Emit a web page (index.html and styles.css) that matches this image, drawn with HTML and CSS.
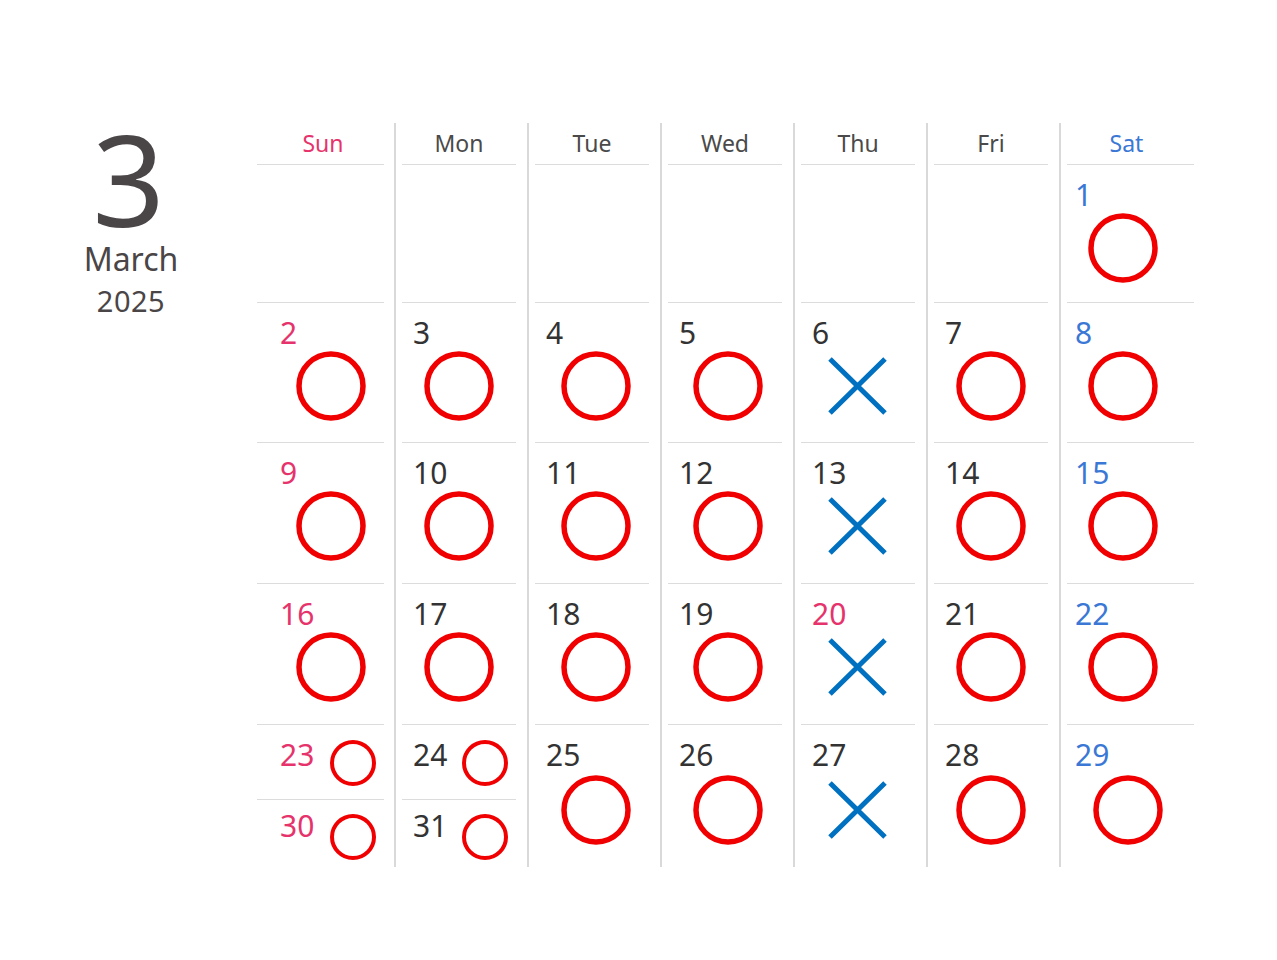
FILE: index.html
```html
<!DOCTYPE html>
<html lang="en">
<head>
<meta charset="utf-8">
<title>March 2025</title>
<link rel="stylesheet" href="styles.css">
</head>
<body>
<svg class="defs" aria-hidden="true">
  <symbol id="o" viewBox="0 0 70 70"><circle cx="35" cy="35" r="32" fill="none" stroke="#f00000" stroke-width="5.5"/></symbol>
  <symbol id="os" viewBox="0 0 46 46"><circle cx="23" cy="23" r="21" fill="none" stroke="#f00000" stroke-width="4"/></symbol>
  <symbol id="x" viewBox="0 0 70 70"><path d="M7 8L62 62M62 8L7 62" fill="none" stroke="#0070c0" stroke-width="5"/></symbol>
</svg>
<div class="page">
  <div class="side">
    <div class="big">3</div>
    <div class="month">March</div>
    <div class="year">2025</div>
  </div>
  <div class="cal">
    <div class="c sun h"><span>Sun</span></div>
    <div class="c h"><span>Mon</span></div>
    <div class="c h"><span>Tue</span></div>
    <div class="c h"><span>Wed</span></div>
    <div class="c h"><span>Thu</span></div>
    <div class="c h"><span>Fri</span></div>
    <div class="c sat h"><span>Sat</span></div>

    <div class="c sun"><div class="in"></div></div>
    <div class="c"><div class="in"></div></div>
    <div class="c"><div class="in"></div></div>
    <div class="c"><div class="in"></div></div>
    <div class="c"><div class="in"></div></div>
    <div class="c"><div class="in"></div></div>
    <div class="c sat"><div class="in"><span class="num">1</span><svg class="mk"><use href="#o"/></svg></div></div>

    <div class="c sun"><div class="in"><span class="num">2</span><svg class="mk"><use href="#o"/></svg></div></div>
    <div class="c"><div class="in"><span class="num">3</span><svg class="mk"><use href="#o"/></svg></div></div>
    <div class="c tue"><div class="in"><span class="num">4</span><svg class="mk"><use href="#o"/></svg></div></div>
    <div class="c wed"><div class="in"><span class="num">5</span><svg class="mk"><use href="#o"/></svg></div></div>
    <div class="c"><div class="in"><span class="num">6</span><svg class="mk"><use href="#x"/></svg></div></div>
    <div class="c"><div class="in"><span class="num">7</span><svg class="mk"><use href="#o"/></svg></div></div>
    <div class="c sat"><div class="in"><span class="num">8</span><svg class="mk"><use href="#o"/></svg></div></div>

    <div class="c sun"><div class="in"><span class="num">9</span><svg class="mk"><use href="#o"/></svg></div></div>
    <div class="c"><div class="in"><span class="num">10</span><svg class="mk"><use href="#o"/></svg></div></div>
    <div class="c tue"><div class="in"><span class="num">11</span><svg class="mk"><use href="#o"/></svg></div></div>
    <div class="c wed"><div class="in"><span class="num">12</span><svg class="mk"><use href="#o"/></svg></div></div>
    <div class="c"><div class="in"><span class="num">13</span><svg class="mk"><use href="#x"/></svg></div></div>
    <div class="c"><div class="in"><span class="num">14</span><svg class="mk"><use href="#o"/></svg></div></div>
    <div class="c sat"><div class="in"><span class="num">15</span><svg class="mk"><use href="#o"/></svg></div></div>

    <div class="c sun"><div class="in"><span class="num">16</span><svg class="mk"><use href="#o"/></svg></div></div>
    <div class="c"><div class="in"><span class="num">17</span><svg class="mk"><use href="#o"/></svg></div></div>
    <div class="c tue"><div class="in"><span class="num">18</span><svg class="mk"><use href="#o"/></svg></div></div>
    <div class="c wed"><div class="in"><span class="num">19</span><svg class="mk"><use href="#o"/></svg></div></div>
    <div class="c holiday"><div class="in"><span class="num">20</span><svg class="mk"><use href="#x"/></svg></div></div>
    <div class="c"><div class="in"><span class="num">21</span><svg class="mk"><use href="#o"/></svg></div></div>
    <div class="c sat"><div class="in"><span class="num">22</span><svg class="mk"><use href="#o"/></svg></div></div>

    <div class="c sun"><div class="in split">
      <div class="half top"><span class="num">23</span><svg class="sm"><use href="#os"/></svg></div>
      <div class="half bot"><span class="num">30</span><svg class="sm"><use href="#os"/></svg></div>
    </div></div>
    <div class="c"><div class="in split">
      <div class="half top"><span class="num">24</span><svg class="sm"><use href="#os"/></svg></div>
      <div class="half bot"><span class="num">31</span><svg class="sm"><use href="#os"/></svg></div>
    </div></div>
    <div class="c tue"><div class="in"><span class="num">25</span><svg class="mk low"><use href="#o"/></svg></div></div>
    <div class="c wed"><div class="in"><span class="num">26</span><svg class="mk low"><use href="#o"/></svg></div></div>
    <div class="c"><div class="in"><span class="num">27</span><svg class="mk low"><use href="#x"/></svg></div></div>
    <div class="c"><div class="in"><span class="num">28</span><svg class="mk low"><use href="#o"/></svg></div></div>
    <div class="c sat last"><div class="in"><span class="num">29</span><svg class="mk low"><use href="#o"/></svg></div></div>
  </div>
</div>
</body>
</html>
```

FILE: styles.css
```css
html, body {
  margin: 0;
  padding: 0;
  background: #ffffff;
}

body {
  width: 1277px;
  height: 960px;
  font-family: "Noto Sans", "Open Sans", "DejaVu Sans", sans-serif;
  color: #333333;
  overflow: hidden;
}

.defs {
  position: absolute;
  width: 0;
  height: 0;
  overflow: hidden;
}

.page {
  display: flex;
  padding-top: 123px;
}

.side {
  width: 257px;
  display: flex;
  flex-direction: column;
  align-items: center;
}

.big {
  font-size: 127px;
  line-height: 100px;
  margin-top: 5px;
  color: #4a4546;
}

.month {
  font-size: 32px;
  line-height: 32px;
  margin-top: 15px;
  margin-left: 5px;
  color: #4a4546;
}

.year {
  font-size: 29px;
  line-height: 29px;
  margin-top: 11px;
  margin-left: 5px;
  color: #4a4546;
  letter-spacing: 0.5px;
}

.cal {
  display: grid;
  grid-template-columns: 137px 133px 133px 133px 133px 133px 135px;
  grid-template-rows: 41px 138px 140px 141px 141px 143px;
}

.c {
  border-left: 2px solid #d9d9d9;
  padding: 0 11px 0 6px;
  display: flex;
  flex-direction: column;
}

.c.sun {
  border-left: none;
  padding: 0 10px 0 0;
}

.c.sat {
  padding: 0 0 0 6px;
}

.h {
  align-items: center;
  justify-content: center;
  font-size: 23px;
  line-height: 41px;
  color: #4a4a4a;
}

.h.sun span {
  color: #e6336b;
  margin-left: 5px;
}

.h.sat span {
  color: #3b78d6;
  margin-right: 8px;
}

.in {
  flex: 1;
  border-top: 1.5px solid #dcdcdc;
  display: flex;
  flex-direction: column;
}

.num {
  display: block;
  font-size: 30px;
  line-height: 36px;
  margin-top: 12px;
  padding-left: 11px;
  color: #333333;
}

.sun .num {
  padding-left: 23px;
  color: #e6336b;
}

.sat .num {
  padding-left: 8px;
  color: #3b78d6;
}

.holiday .num {
  color: #e6336b;
}

.mk {
  width: 70px;
  height: 70px;
  align-self: center;
  margin-top: 0px;
}

.mk.low {
  margin-top: 2px;
}

.sun .mk {
  margin-left: 20px;
}

.tue .mk {
  margin-left: 8px;
}

.wed .mk {
  margin-left: 6px;
}

.sat .mk {
  margin-right: 16px;
}

.sat.last .mk {
  margin-right: 6px;
}

.split {
  border-top: none;
}

.half {
  display: flex;
  align-items: flex-start;
  border-top: 1.5px solid #dcdcdc;
}

.half.top {
  height: 74px;
}

.half.bot {
  flex: 1;
}

.sm {
  width: 46px;
  height: 46px;
  margin-left: auto;
  margin-right: 8px;
}

.half.top .sm {
  margin-top: 15px;
}

.half.bot .num {
  margin-top: 8px;
}

.half.bot .sm {
  margin-top: 14px;
}
```
